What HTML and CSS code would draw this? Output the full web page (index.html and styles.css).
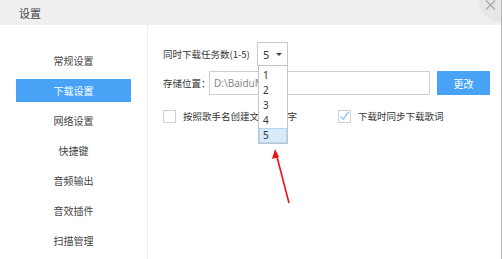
FILE: index.html
```html
<!DOCTYPE html>
<html lang="zh">
<head>
<meta charset="utf-8">
<title>设置</title>
<link rel="stylesheet" href="styles.css">
</head>
<body>
<div class="window">
  <div class="titlebar">
    <span class="title">设置</span>
    <div class="close">
      <svg width="11" height="10" viewBox="0 0 11 10"><path d="M1 0.5 L10 9.5 M10 0.5 L1 9.5" stroke="#a9a9a9" stroke-width="1.3" fill="none"/></svg>
    </div>
  </div>
  <div class="main">
    <nav class="sidebar">
      <div class="nav-item">常规设置</div>
      <div class="nav-item active">下载设置</div>
      <div class="nav-item">网络设置</div>
      <div class="nav-item">快捷键</div>
      <div class="nav-item">音频输出</div>
      <div class="nav-item">音效插件</div>
      <div class="nav-item">扫描管理</div>
    </nav>
    <section class="content">
      <div class="row row-tasks">
        <span class="label label-tasks">同时下载任务数(1-5)</span>
        <div class="select">
          <span class="select-value">5</span>
          <span class="caret"></span>
        </div>
      </div>
      <div class="row row-path">
        <span class="label label-path">存储位置：</span>
        <div class="input">D:\BaiduMusic</div>
        <button class="btn">更改</button>
      </div>
      <div class="row row-checks">
        <label class="check-group first">
          <span class="checkbox"></span>
          <span class="check-text">按照歌手名创建文件夹名字</span>
        </label>
        <label class="check-group">
          <span class="checkbox checked">
            <svg width="11" height="10" viewBox="0 0 11 10"><path d="M1.5 5.5 L4.2 8.3 L9.5 1" stroke="#8cc3f0" stroke-width="1.3" fill="none"/></svg>
          </span>
          <span class="check-text">下载时同步下载歌词</span>
        </label>
      </div>
      <ul class="dropdown">
        <li>1</li>
        <li>2</li>
        <li>3</li>
        <li>4</li>
        <li class="hover">5</li>
      </ul>
      <svg class="arrow" width="30" height="60" viewBox="0 0 30 60">
        <path d="M24 55 L11 5" stroke="#f01010" stroke-width="1.6" fill="none"/>
        <path d="M10 1 L7 11 L14 9 Z" fill="#f01010"/>
      </svg>
    </section>
  </div>
</div>
</body>
</html>
```

FILE: styles.css
```css
html, body {
  margin: 0;
  padding: 0;
  background: #ffffff;
}
body {
  width: 502px;
  height: 259px;
  overflow: hidden;
  font-family: "Noto Sans", "Noto Sans CJK SC", sans-serif;
  font-size: 10px;
  color: #333333;
}
.window {
  position: relative;
  width: 502px;
  height: 259px;
  border-right: 1px solid #b8b8b8;
  box-sizing: border-box;
}
.titlebar {
  position: relative;
  height: 25px;
  background: #efefef;
  display: flex;
  align-items: center;
  padding-left: 19px;
  overflow: hidden;
}
.title {
  font-size: 11px;
  color: #444444;
  font-family: "Noto Sans CJK SC", sans-serif;
}
.close {
  position: absolute;
  right: -20px;
  top: -20px;
  width: 42px;
  height: 42px;
  border-radius: 50%;
  background: #e6e6e6;
}
.close svg {
  position: absolute;
  left: 6px;
  top: 20px;
}
.main {
  display: flex;
  height: 234px;
}
.sidebar {
  width: 147px;
  border-right: 1px solid #eeeeee;
  padding-top: 24px;
  display: flex;
  flex-direction: column;
  align-items: center;
  gap: 7px;
  flex-shrink: 0;
}
.nav-item {
  width: 115px;
  height: 23px;
  line-height: 23px;
  text-align: center;
  font-family: "Noto Sans CJK SC", sans-serif;
  font-size: 10px;
  color: #444444;
}
.nav-item.active {
  background: #48a3f6;
  color: #ffffff;
}
.content {
  position: relative;
  flex: 1;
  padding: 17px 0 0 15px;
  font-size: 9.5px;
}
.row {
  display: flex;
  align-items: center;
}
.label {
  font-family: "Noto Sans CJK SC", sans-serif;
  white-space: nowrap;
}
.label-tasks {
  width: 94px;
}
.select {
  width: 31px;
  height: 24px;
  box-sizing: border-box;
  border: 1px solid #c9c9c9;
  display: flex;
  align-items: center;
  justify-content: space-between;
  padding: 0 5px 0 5px;
  font-size: 11px;
}
.caret {
  width: 0;
  height: 0;
  border-left: 3px solid transparent;
  border-right: 3px solid transparent;
  border-top: 3px solid #444444;
}
.row-path {
  margin-top: 5px;
}
.label-path {
  width: 46px;
}
.input {
  width: 221px;
  height: 24px;
  box-sizing: border-box;
  border: 1px solid #cfcfcf;
  padding-left: 4px;
  line-height: 22px;
  color: #888888;
  font-size: 10px;
  overflow: hidden;
  white-space: nowrap;
}
.btn {
  margin-left: 7px;
  width: 53px;
  height: 24px;
  border: none;
  background: #48a3f6;
  color: #ffffff;
  font-family: "Noto Sans CJK SC", sans-serif;
  font-size: 10px;
  padding: 0;
}
.row-checks {
  margin-top: 14px;
}
.check-group {
  display: flex;
  align-items: center;
}
.check-group.first {
  width: 175px;
}
.checkbox {
  width: 13px;
  height: 13px;
  box-sizing: border-box;
  border: 1px solid #d0d0d0;
  background: #ffffff;
  display: flex;
  align-items: center;
  justify-content: center;
}
.check-text {
  margin-left: 7px;
  font-family: "Noto Sans CJK SC", sans-serif;
  white-space: nowrap;
}
.dropdown {
  position: absolute;
  left: 110px;
  top: 40px;
  width: 30px;
  margin: 0;
  padding: 2px 0 0 0;
  list-style: none;
  background: #ffffff;
  border: 1px solid #c4c4c4;
  box-sizing: border-box;
}
.dropdown li {
  height: 15px;
  line-height: 15px;
  padding-left: 4px;
  font-size: 10px;
  color: #333333;
}
.dropdown li.hover {
  background: #d7ebfc;
  box-shadow: inset 0 0 0 1px #b3d6f3;
}
.arrow {
  position: absolute;
  left: 117px;
  top: 123px;
}
```
